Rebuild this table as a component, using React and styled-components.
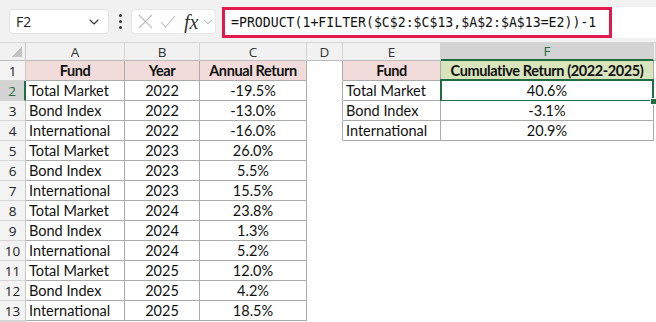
import React from 'react';
import styled, { createGlobalStyle } from 'styled-components';
import { ChevronDown } from 'lucide-react';

const Global = createGlobalStyle`
  html, body { margin: 0; padding: 0; background: #fff; }
  body { width: 656px; height: 322px; overflow: hidden; }
`;

const Page = styled.div`
  width: 656px;
  height: 322px;
  display: flex;
  flex-direction: column;
  background: #fff;
`;

const Toolbar = styled.div`
  height: 42px;
  flex: none;
  display: flex;
  align-items: center;
  background: #f1f1f1;
  padding: 0 0 0 9px;
  box-sizing: border-box;
`;

const NameBox = styled.div`
  width: 100px;
  height: 25px;
  margin-top: 1px;
  box-sizing: border-box;
  background: #fff;
  border: 1px solid #e2e2e2;
  border-radius: 4px;
  display: flex;
  align-items: center;
  justify-content: space-between;
  padding: 0 6px 0 6px;
  font-family: "Open Sans", sans-serif;
  font-size: 14px;
  color: #222;
`;

const Kebab = styled.div`
  width: 22px;
  display: flex;
  flex-direction: column;
  align-items: center;
  gap: 3px;
  span {
    width: 3px;
    height: 3px;
    border-radius: 50%;
    background: #333;
  }
`;

const FnBox = styled.div`
  width: 85px;
  height: 25px;
  margin-top: 1px;
  box-sizing: border-box;
  background: #fff;
  border: 1px solid #e6e6e6;
  border-radius: 4px;
  display: flex;
  align-items: center;
  padding: 0 0 0 6px;
  overflow: hidden;
  svg { flex: none; }
`;

const Gap = styled.span`
  flex: none;
  width: ${p => p.$w}px;
`;

const Fx = styled.span`
  flex: none;
  width: 16px;
  font-family: "Liberation Serif", serif;
  font-style: italic;
  font-size: 20px;
  color: #333;
  line-height: 1;
`;

const FormulaField = styled.div`
  flex: 1;
  margin-left: 6px;
  height: 31px;
  margin-top: 2px;
  background: #fff;
  display: flex;
  align-items: center;
`;

const Highlight = styled.div`
  width: 390px;
  height: 31px;
  box-sizing: border-box;
  border: 3px solid #e2194c;
  display: flex;
  align-items: center;
  padding-left: 6px;
  font-family: "DejaVu Sans Mono", monospace;
  font-size: 13.2px;
  color: #111;
  white-space: nowrap;
`;

const Sheet = styled.div`
  flex: 1;
  display: grid;
  grid-template-columns: 26px 99px 75px 107px 36px 98px 213px 1fr;
  grid-template-rows: 19px repeat(13, 20px) 1fr;
  font-family: Lato, "Liberation Sans", sans-serif;
  font-size: 14.5px;
  color: #111;
`;

const Corner = styled.div`
  background: #f1f1f1;
  border-right: 1px solid #c9c9c9;
  border-bottom: 1px solid #bdbdbd;
  border-top: 1px solid #d6d6d6;
  position: relative;
  &::after {
    content: '';
    position: absolute;
    right: 3px;
    bottom: 3px;
    width: 11px;
    height: 11px;
    background: linear-gradient(135deg, transparent 50%, #c2c2c2 50%);
  }
`;

const ColHead = styled.div`
  background: ${p => (p.$active ? '#d3d3d3' : '#f1f1f1')};
  color: ${p => (p.$active ? '#1d6b3f' : '#333')};
  border-top: 1px solid #d6d6d6;
  border-right: 1px solid #d3d3d3;
  border-bottom: ${p => (p.$active ? '2px solid #1e6e42' : '1px solid #bdbdbd')};
  display: flex;
  align-items: center;
  justify-content: center;
  font-family: "Open Sans", sans-serif;
  font-size: 13.5px;
`;

const RowHead = styled.div`
  background: ${p => (p.$active ? '#d3d3d3' : '#f3f3f3')};
  color: ${p => (p.$active ? '#1d6b3f' : '#222')};
  border-right: ${p => (p.$active ? '2px solid #1e6e42' : '1px solid #c9c9c9')};
  border-bottom: 1px solid #d6d6d6;
  display: flex;
  align-items: center;
  justify-content: center;
  font-family: "Open Sans", sans-serif;
  font-size: 13.5px;
`;

const Cell = styled.div`
  position: relative;
  background: ${p => p.$bg || '#fff'};
  font-weight: ${p => (p.$bold ? 700 : 400)};
  letter-spacing: ${p => (p.$bold ? '-0.4px' : '0')};
  border-right: 1px solid ${p => (p.$r ? '#ababab' : 'transparent')};
  border-bottom: 1px solid ${p => (p.$b ? '#ababab' : 'transparent')};
  display: flex;
  align-items: center;
  justify-content: ${p => (p.$align === 'left' ? 'flex-start' : 'center')};
  padding-left: ${p => (p.$align === 'left' ? '3px' : '0')};
  white-space: nowrap;
  overflow: hidden;
  ${p =>
    p.$selected &&
    `
    overflow: visible;
    &::after {
      content: '';
      position: absolute;
      left: -1px;
      top: -2px;
      right: -1px;
      bottom: -2px;
      border: 2px solid #1e6e42;
      pointer-events: none;
    }
    &::before {
      content: '';
      position: absolute;
      right: -4px;
      bottom: -5px;
      width: 5px;
      height: 5px;
      background: #1e6e42;
      border: 1px solid #fff;
      z-index: 2;
    }
  `}
`;

const PINK = '#f2dcdb';
const GREEN = '#d8e4bc';

const data = [
  ['Total Market', 2022, '-19.5%'],
  ['Bond Index', 2022, '-13.0%'],
  ['International', 2022, '-16.0%'],
  ['Total Market', 2023, '26.0%'],
  ['Bond Index', 2023, '5.5%'],
  ['International', 2023, '15.5%'],
  ['Total Market', 2024, '23.8%'],
  ['Bond Index', 2024, '1.3%'],
  ['International', 2024, '5.2%'],
  ['Total Market', 2025, '12.0%'],
  ['Bond Index', 2025, '4.2%'],
  ['International', 2025, '18.5%'],
];

const summary = [
  ['Total Market', '40.6%'],
  ['Bond Index', '-3.1%'],
  ['International', '20.9%'],
];

const CancelIcon = () => (
  <svg width="15" height="15" viewBox="0 0 15 15" fill="none" stroke="#bdbdbd" strokeWidth="1.1">
    <path d="M1 1 L14 14 M14 1 L1 14" />
  </svg>
);

const EnterIcon = () => (
  <svg width="16" height="13" viewBox="0 0 16 13" fill="none" stroke="#bdbdbd" strokeWidth="1.1">
    <path d="M1 7 L5.5 12 L15 1" />
  </svg>
);

function Row({ n }) {
  const header = n === 1;
  const d = data[n - 2];
  const s = header ? null : summary[n - 2];
  const inSummary = n <= 4;
  return (
    <>
      <RowHead $active={n === 2}>{n}</RowHead>
      {header ? (
        <>
          <Cell $bg={PINK} $bold $r $b>Fund</Cell>
          <Cell $bg={PINK} $bold $r $b>Year</Cell>
          <Cell $bg={PINK} $bold $r $b>Annual Return</Cell>
          <Cell $r />
          <Cell $bg={PINK} $bold $r $b>Fund</Cell>
          <Cell $bg={GREEN} $bold $r $b>Cumulative Return (2022-2025)</Cell>
        </>
      ) : (
        <>
          <Cell $align="left" $r $b>{d[0]}</Cell>
          <Cell $r $b>{d[1]}</Cell>
          <Cell $r $b>{d[2]}</Cell>
          <Cell $r={inSummary} />
          {inSummary ? (
            <>
              <Cell $align="left" $r $b>{s[0]}</Cell>
              <Cell $r $b $selected={n === 2}>{s[1]}</Cell>
            </>
          ) : (
            <>
              <Cell />
              <Cell />
            </>
          )}
        </>
      )}
      <Cell />
    </>
  );
}

export default function App() {
  const letters = ['A', 'B', 'C', 'D', 'E', 'F', ''];
  return (
    <Page>
      <Global />
      <Toolbar>
        <NameBox>
          F2
          <ChevronDown size={16} strokeWidth={1.6} color="#333" />
        </NameBox>
        <Kebab><span /><span /><span /></Kebab>
        <FnBox>
          <CancelIcon />
          <Gap $w={7} />
          <EnterIcon />
          <Gap $w={8} />
          <Fx>fx</Fx>
          <Gap $w={1} />
          <ChevronDown size={14} strokeWidth={1.4} color="#888" />
        </FnBox>
        <FormulaField>
          <Highlight>=PRODUCT(1+FILTER($C$2:$C$13,$A$2:$A$13=E2))-1</Highlight>
        </FormulaField>
      </Toolbar>
      <Sheet>
        <Corner />
        {letters.map((l, i) => (
          <ColHead key={i} $active={l === 'F'}>{l}</ColHead>
        ))}
        {Array.from({ length: 13 }, (_, i) => (
          <Row key={i} n={i + 1} />
        ))}
        <RowHead />
      </Sheet>
    </Page>
  );
}
